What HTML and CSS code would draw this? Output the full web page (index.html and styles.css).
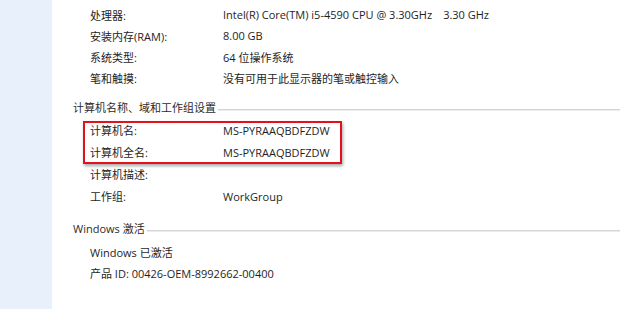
FILE: index.html
```html
<!DOCTYPE html>
<html lang="zh-CN">
  <head>
    <meta charset="UTF-8" />
    <meta name="viewport" content="width=device-width, initial-scale=1.0" />
    <title>系统</title>
    <link rel="stylesheet" href="styles.css">
  </head>
  <body>
    <div class="sidebar"></div>

    <div class="main">
      <div class="rows rows-system">
        <div class="row"><span class="label">处理器:</span><span class="value">Intel(R) Core(TM) i5-4590 CPU @ 3.30GHz<span class="speed">3.30 GHz</span></span></div>
        <div class="row"><span class="label">安装内存(RAM):</span><span class="value">8.00 GB</span></div>
        <div class="row"><span class="label">系统类型:</span><span class="value">64 位操作系统</span></div>
        <div class="row"><span class="label">笔和触摸:</span><span class="value">没有可用于此显示器的笔或触控输入</span></div>
      </div>

      <div class="section-title section-computer">
        <span>计算机名称、域和工作组设置</span>
        <div class="rule"></div>
      </div>

      <div class="rows rows-name">
        <div class="highlight-group">
          <div class="row"><span class="label">计算机名:</span><span class="value">MS-PYRAAQBDFZDW</span></div>
          <div class="row"><span class="label">计算机全名:</span><span class="value">MS-PYRAAQBDFZDW</span></div>
          <div class="highlight"></div>
        </div>
        <div class="row"><span class="label">计算机描述:</span><span class="value"></span></div>
        <div class="row"><span class="label">工作组:</span><span class="value">WorkGroup</span></div>
      </div>

      <div class="section-title section-windows">
        <span>Windows 激活</span>
        <div class="rule"></div>
      </div>

      <div class="rows rows-activation">
        <div class="row"><span class="value">Windows 已激活</span></div>
        <div class="row"><span class="value">产品 ID: 00426-OEM-8992662-00400</span></div>
      </div>
    </div>
  </body>
</html>
```

FILE: styles.css
```css
/* General styles */
body {
  font-family: "Open Sans", "Noto Sans CJK SC", sans-serif;
  font-size: 11px;
  color: #1e1e1e;
  background-color: #fff;
  margin: 0;
  display: flex;
  height: 100vh;
  overflow: hidden;
}

.sidebar {
  width: 52px;
  flex-shrink: 0;
  background-color: #e8f0fb;
}

.main {
  flex: 1;
  padding: 4px 0 0 21px;
}

/* Property rows */
.rows {
  padding-left: 17px;
}

.row {
  display: flex;
  align-items: center;
  height: 21px;
  white-space: nowrap;
}

.rows-name .row {
  height: 22px;
}

.label {
  width: 133px;
  flex-shrink: 0;
}

.speed {
  margin-left: 11px;
}

/* Section headings with a rule to the right */
.section-title {
  display: flex;
  align-items: center;
  height: 20px;
  color: #2b2b2b;
}

.section-computer {
  margin: 9px 0 2px;
}

.section-windows {
  margin: 11px 0 3px;
}

.rule {
  flex: 1;
  height: 1px;
  margin: 5px 0 0 2px;
  background-color: #d5d5d5;
  border-bottom: 1px solid #ececec;
}

/* Red annotation box */
.highlight-group {
  position: relative;
}

.highlight {
  position: absolute;
  top: 2px;
  left: -7px;
  width: 259px;
  height: 43px;
  box-sizing: border-box;
  border: 2px solid #e3111b;
  box-shadow: 1px 2px 3px rgba(0, 0, 0, 0.35);
}
```
